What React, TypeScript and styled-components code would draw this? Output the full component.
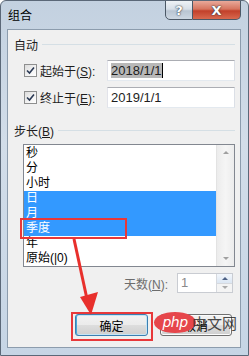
import React from 'react';
import styled, { createGlobalStyle } from 'styled-components';

const GlobalStyle = createGlobalStyle`
  html, body {
    margin: 0;
    padding: 0;
    background: #ffffff;
  }
  body {
    font-family: "Liberation Sans", "Noto Sans CJK SC", sans-serif;
    font-size: 12px;
    color: #1e1e1e;
  }
`;

const WindowStyled = styled.div`
  position: relative;
  box-sizing: border-box;
  width: 249px;
  height: 356px;
  display: flex;
  flex-direction: column;
  padding: 0 7px 7px 6px;
  border: 1px solid #5b6878;
  border-radius: 6px 6px 0 0;
  background: linear-gradient(180deg, #c3d1e0 0%, #d2dde9 40%, #c6d5e5 100%);
  overflow: hidden;
`;

const TitleBarStyled = styled.div`
  height: 28px;
  display: flex;
  justify-content: space-between;
  align-items: flex-start;
`;

const TitleStyled = styled.span`
  margin: 7px 0 0 1px;
  line-height: 16px;
  color: #000;
`;

const CaptionButtonsStyled = styled.div`
  display: flex;
  margin-top: -1px;
`;

const CaptionButtonStyled = styled.div<{ $close?: boolean }>`
  box-sizing: border-box;
  width: ${({ $close }) => ($close ? '48px' : '28px')};
  height: 20px;
  display: flex;
  align-items: center;
  justify-content: center;
  border: 1px solid #4b5866;
  border-left-width: ${({ $close }) => ($close ? '0' : '1px')};
  border-radius: ${({ $close }) => ($close ? '0 0 5px 0' : '0 0 0 5px')};
  background: ${({ $close }) =>
    $close
      ? 'linear-gradient(180deg, #e9a99a 0%, #d6755f 45%, #c2402a 55%, #d8694f 100%)'
      : 'linear-gradient(180deg, #eef2f6 0%, #d7dfe8 45%, #b9c5d2 55%, #cdd7e2 100%)'};
  color: #fff;
  font-family: "DejaVu Sans", sans-serif;
  font-weight: bold;
  font-size: ${({ $close }) => ($close ? '13px' : '13px')};
  text-shadow: 0 0 2px #303a46, 0 0 1px #303a46;
`;

const ContentStyled = styled.div`
  flex: 1;
  display: flex;
  flex-direction: column;
  padding: 6px 5px 0 6px;
  background: #f0f0f0;
  border: 1px solid #8c9cad;
`;

const SectionHeaderStyled = styled.div<{ $gap: number }>`
  height: 16px;
  display: flex;
  align-items: center;
  gap: 4px;
  margin-top: ${({ $gap }) => $gap}px;
  color: #1e1e1e;

  &::after {
    content: '';
    flex: 1;
    height: 1px;
    background: #d5dfe5;
  }
`;

const FieldRowStyled = styled.div<{ $gap: number }>`
  display: flex;
  align-items: center;
  margin-top: ${({ $gap }) => $gap}px;
  padding-left: 10px;
`;

const CheckboxStyled = styled.span`
  box-sizing: border-box;
  width: 13px;
  height: 13px;
  margin-right: 3px;
  display: flex;
  align-items: center;
  justify-content: center;
  border: 1px solid #8e8f8f;
  background: linear-gradient(135deg, #dcdcdc 0%, #f4f4f4 60%, #ffffff 100%);
`;

const FieldLabelStyled = styled.span`
  width: 67px;
  white-space: nowrap;
`;

const TextInputStyled = styled.div`
  box-sizing: border-box;
  flex: 1;
  height: 21px;
  display: flex;
  align-items: center;
  padding-left: 3px;
  background: #fff;
  border: 1px solid #abadb3;
  border-color: #abadb3 #dbdfe6 #e3e9ef #e2e3ea;
  font-size: 13px;
`;

const SelectedTextStyled = styled.span`
  background: #b8b8b8;
  line-height: 15px;
  border-right: 1px solid #000;
`;

const ListBoxStyled = styled.div`
  box-sizing: border-box;
  height: 123px;
  margin: 6px 0 0 9px;
  display: flex;
  border: 1px solid #828790;
  background: #fff;
`;

const ListItemsStyled = styled.div`
  flex: 1;
  padding-top: 1px;
`;

const ListItemStyled = styled.div<{ $selected?: boolean }>`
  height: 15px;
  line-height: 15px;
  padding-left: 2px;
  background: ${({ $selected }) => ($selected ? '#3399ff' : 'transparent')};
  color: ${({ $selected }) => ($selected ? '#fff' : '#000')};
  white-space: nowrap;
`;

const ScrollTrackStyled = styled.div`
  width: 17px;
  display: flex;
  flex-direction: column;
  justify-content: space-between;
  align-items: center;
  padding: 6px 0 6px;
  background: linear-gradient(90deg, #ececec, #f5f5f5 50%, #ececec);
  border-left: 1px solid #e3e3e3;
`;

const ScrollArrowStyled = styled.span<{ $down?: boolean }>`
  width: 0;
  height: 0;
  border-left: 3px solid transparent;
  border-right: 3px solid transparent;
  ${({ $down }) => ($down ? 'border-top: 3px solid #a0a0a0;' : 'border-bottom: 3px solid #a0a0a0;')}
`;

const SpinRowStyled = styled.div`
  display: flex;
  justify-content: flex-end;
  align-items: center;
  gap: 9px;
  margin-top: 6px;
  padding-right: 2px;
  color: #6d6d6d;
`;

const SpinBoxStyled = styled.div`
  box-sizing: border-box;
  width: 56px;
  height: 20px;
  display: flex;
  border: 1px solid #c9ccd2;
  background: #fff;
`;

const SpinValueStyled = styled.span`
  flex: 1;
  padding: 1px 0 0 3px;
  color: #8a8a8a;
  font-size: 13px;
`;

const SpinButtonsStyled = styled.div`
  width: 15px;
  display: flex;
  flex-direction: column;
  border-left: 1px solid #d6d9de;
`;

const SpinButtonStyled = styled.div<{ $up?: boolean }>`
  flex: 1;
  display: flex;
  align-items: center;
  justify-content: center;
  background: ${({ $up }) => ($up ? 'linear-gradient(180deg, #f3f7fc, #dbe6f3)' : '#f4f4f4')};
  border-bottom: ${({ $up }) => ($up ? '1px solid #d6d9de' : '0')};
`;

const SpinArrowStyled = styled.span<{ $down?: boolean; $active?: boolean }>`
  width: 0;
  height: 0;
  border-left: 3px solid transparent;
  border-right: 3px solid transparent;
  ${({ $down, $active }) =>
    $down
      ? `border-top: 3px solid ${$active ? '#4d6185' : '#a9a9a9'};`
      : `border-bottom: 3px solid ${$active ? '#4d6185' : '#a9a9a9'};`}
`;

const ButtonRowStyled = styled.div`
  display: flex;
  justify-content: flex-end;
  gap: 12px;
  margin-top: 21px;
  padding-right: 3px;
`;

const PushButtonStyled = styled.div<{ $default?: boolean; $width: number }>`
  box-sizing: border-box;
  width: ${({ $width }) => $width}px;
  height: 22px;
  display: flex;
  align-items: center;
  justify-content: center;
  border: 1px solid ${({ $default }) => ($default ? '#3c7fb1' : '#707070')};
  border-radius: 3px;
  background: linear-gradient(180deg, #f2f2f2 0%, #ebebeb 50%, #dddddd 51%, #cfcfcf 100%);
  box-shadow: ${({ $default }) => ($default ? 'inset 1px 0 0 #48a6d8, inset 0 0 0 1px #c4e5f6' : 'inset 0 0 0 1px #fcfcfc')};
  color: #000;
`;

const MarkBoxStyled = styled.div<{ $x: number; $y: number; $w: number; $h: number }>`
  position: absolute;
  left: ${({ $x }) => $x}px;
  top: ${({ $y }) => $y}px;
  width: ${({ $w }) => $w}px;
  height: ${({ $h }) => $h}px;
  box-sizing: border-box;
  border: 2px solid #e8383a;
  pointer-events: none;
`;

const OverlaySvgStyled = styled.svg`
  position: absolute;
  left: 0;
  top: 0;
  pointer-events: none;
`;

const WatermarkStyled = styled.div`
  position: absolute;
  left: 153px;
  top: 311px;
  display: flex;
  align-items: center;
  pointer-events: none;
`;

const WatermarkBadgeStyled = styled.span`
  width: 42px;
  height: 21px;
  display: flex;
  align-items: center;
  justify-content: center;
  border-radius: 50%;
  background: #e6464b;
  color: #fff;
  font-family: "DejaVu Sans", sans-serif;
  font-style: italic;
  font-size: 14px;
  letter-spacing: -0.5px;
  padding-bottom: 2px;
  box-sizing: border-box;
`;

const WatermarkTextStyled = styled.span`
  margin-left: -4px;
  font-family: "Noto Sans CJK SC", sans-serif;
  font-size: 15px;
  color: #2c2c2c;
  opacity: 0.85;
`;

const Key = styled.u`
  text-decoration: underline;
`;

const items = ['秒', '分', '小时', '日', '月', '季度', '年', '原始(|0)'];
const selected = ['日', '月', '季度'];

const Check = () => (
  <svg width="9" height="9" viewBox="0 0 9 9">
    <path d="M1 4.5 L3.5 7 L8 1.5" fill="none" stroke="#2b3a55" strokeWidth="1.6" />
  </svg>
);

const App = () => {
  return (
    <>
      <GlobalStyle />
      <WindowStyled>
        <TitleBarStyled>
          <TitleStyled>组合</TitleStyled>
          <CaptionButtonsStyled>
            <CaptionButtonStyled>?</CaptionButtonStyled>
            <CaptionButtonStyled $close>X</CaptionButtonStyled>
          </CaptionButtonsStyled>
        </TitleBarStyled>
        <ContentStyled>
          <SectionHeaderStyled $gap={0}>自动</SectionHeaderStyled>
          <FieldRowStyled $gap={8}>
            <CheckboxStyled>
              <Check />
            </CheckboxStyled>
            <FieldLabelStyled>
              起始于(<Key>S</Key>):
            </FieldLabelStyled>
            <TextInputStyled>
              <SelectedTextStyled>2018/1/1</SelectedTextStyled>
            </TextInputStyled>
          </FieldRowStyled>
          <FieldRowStyled $gap={6}>
            <CheckboxStyled>
              <Check />
            </CheckboxStyled>
            <FieldLabelStyled>
              终止于(<Key>E</Key>):
            </FieldLabelStyled>
            <TextInputStyled>2019/1/1</TextInputStyled>
          </FieldRowStyled>
          <SectionHeaderStyled $gap={14}>
            <span>
              步长(<Key>B</Key>)
            </span>
          </SectionHeaderStyled>
          <ListBoxStyled>
            <ListItemsStyled>
              {items.map((item) => (
                <ListItemStyled key={item} $selected={selected.includes(item)}>
                  {item}
                </ListItemStyled>
              ))}
            </ListItemsStyled>
            <ScrollTrackStyled>
              <ScrollArrowStyled />
              <ScrollArrowStyled $down />
            </ScrollTrackStyled>
          </ListBoxStyled>
          <SpinRowStyled>
            <span>
              天数(<Key>N</Key>):
            </span>
            <SpinBoxStyled>
              <SpinValueStyled>1</SpinValueStyled>
              <SpinButtonsStyled>
                <SpinButtonStyled $up>
                  <SpinArrowStyled $active />
                </SpinButtonStyled>
                <SpinButtonStyled>
                  <SpinArrowStyled $down />
                </SpinButtonStyled>
              </SpinButtonsStyled>
            </SpinBoxStyled>
          </SpinRowStyled>
          <ButtonRowStyled>
            <PushButtonStyled $default $width={73}>
              确定
            </PushButtonStyled>
            <PushButtonStyled $width={72}>取消</PushButtonStyled>
          </ButtonRowStyled>
        </ContentStyled>

        <MarkBoxStyled $x={19} $y={217} $w={107} $h={21} />
        <MarkBoxStyled $x={70} $y={311} $w={82} $h={29} />
        <OverlaySvgStyled width="249" height="356" viewBox="0 0 249 356">
          <line x1="73" y1="238" x2="86" y2="298" stroke="#e8302c" strokeWidth="3" />
          <polygon points="79,296 97,291 90,314" fill="#e8302c" />
        </OverlaySvgStyled>
        <WatermarkStyled>
          <WatermarkBadgeStyled>php</WatermarkBadgeStyled>
          <WatermarkTextStyled>中文网</WatermarkTextStyled>
        </WatermarkStyled>
      </WindowStyled>
    </>
  );
};

export default App;
